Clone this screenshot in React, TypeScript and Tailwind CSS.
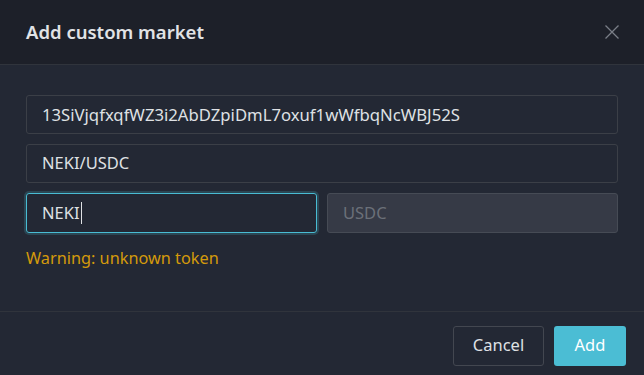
export default function App() {
  return (
    <div className="w-[644px] h-[375px] bg-[#232834] flex flex-col overflow-hidden" style={{ fontFamily: '"Noto Sans", "Open Sans", sans-serif' }}>
      <div className="h-[65px] shrink-0 bg-[#1d2029] border-b border-[#30343c] flex items-center justify-between pl-[26px] pr-[24px]">
        <div className="text-[18.5px] font-semibold text-[#e1e3e6]">Add custom market</div>
        <svg width="16" height="16" viewBox="0 0 16 16" className="text-[#7a7e87]">
          <path d="M1.5 1.5 L14.5 14.5 M14.5 1.5 L1.5 14.5" stroke="currentColor" strokeWidth="1.3" fill="none" />
        </svg>
      </div>
      <div className="flex-1 px-[26px] pt-[30px] flex flex-col gap-[10px]">
        <div className="h-[39px] border border-[#3b3f47] rounded-[3px] flex items-center px-[15px] text-[16.7px] text-[#dfe1e4]">13SiVjqfxqfWZ3i2AbDZpiDmL7oxuf1wWfbqNcWBJ52S</div>
        <div className="h-[39px] border border-[#3b3f47] rounded-[3px] flex items-center px-[15px] text-[16.5px] text-[#dfe1e4]">NEKI/USDC</div>
        <div className="flex gap-[10px]">
          <div className="flex-1 h-[40px] border border-[#49bcd3] rounded-[3px] flex items-center px-[15px] text-[16.5px] text-[#dfe1e4] shadow-[0_0_0_2px_rgba(73,188,211,0.2)]">
            NEKI<span className="inline-block w-px h-[22px] ml-px bg-[#dfe1e4]" />
          </div>
          <div className="flex-1 h-[40px] border border-[#464b55] bg-[#363a46] rounded-[3px] flex items-center px-[15px] text-[16.5px] text-[#6b7079]">USDC</div>
        </div>
        <div className="text-[16.3px] text-[#d49a0b] mt-[3px]">Warning: unknown token</div>
      </div>
      <div className="h-[64px] shrink-0 border-t border-[#30343c] flex items-center justify-end gap-[10px] pr-[18px] pt-[4px]">
        <button className="h-[40px] w-[91px] border border-[#434750] rounded-[3px] text-[16.5px] text-[#dfe1e4]">Cancel</button>
        <button className="h-[40px] w-[72px] bg-[#4bbdd4] rounded-[3px] text-[16.5px] text-white">Add</button>
      </div>
    </div>
  );
}
